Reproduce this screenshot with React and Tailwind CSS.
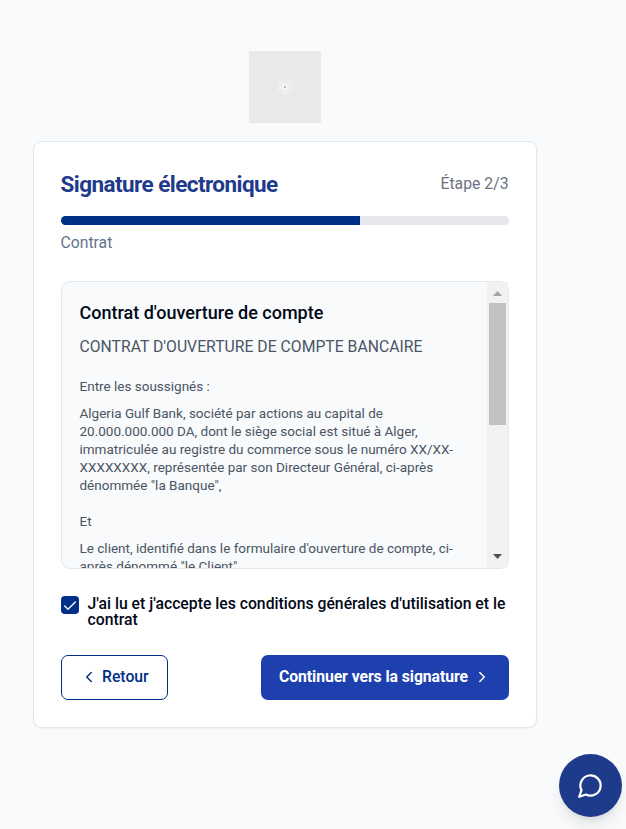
import { Check, ChevronLeft, ChevronRight } from "lucide-react";

function Logo() {
  return (
    <div className="flex size-[72px] items-center justify-center bg-[#e9e9e9]">
      <svg width="18" height="18" viewBox="0 0 18 18">
        <circle cx="9" cy="9" r="8" fill="#eeeeee" />
        <circle cx="9" cy="9" r="6" fill="none" stroke="#ebebeb" strokeWidth="2.5" strokeDasharray="1 3.7" />
        <circle cx="9" cy="9" r="3.2" fill="#f6f6f6" />
        <rect x="8" y="8" width="2" height="2" fill="#b8b8b8" />
      </svg>
    </div>
  );
}

function ChatIcon() {
  return (
    <svg width="27" height="27" viewBox="0 0 24 24" fill="none" stroke="currentColor" strokeWidth="2" strokeLinecap="round" strokeLinejoin="round">
      <path d="M7.9 20A9 9 0 1 0 4 16.1L2 22Z" />
    </svg>
  );
}

function Header() {
  return (
    <header>
      <div className="flex h-8 items-center justify-between">
        <h1 className="-ml-[0.5px] text-[22.5px] leading-8 font-bold tracking-[-0.5625px] text-[#1e3a8a]">Signature électronique</h1>
        <span className="mr-[0.5px] text-[15.75px] leading-8 text-[#6b7280]">Étape 2/3</span>
      </div>
      <div className="mt-4 h-[9px] overflow-hidden rounded-full bg-[#e5e7eb]">
        <div className="h-full w-2/3 bg-[#002f87]" />
      </div>
      <p className="mt-[7px] -ml-[0.5px] text-[15.75px] leading-[22px] text-[#64748b]">Contrat</p>
    </header>
  );
}

function Scrollbar() {
  return (
    <div className="flex w-[21px] shrink-0 flex-col items-center bg-[#f1f1f1]">
      <svg width="21" height="21" viewBox="0 0 21 21">
        <path d="M6 14h9l-4.5-5z" fill="#a3a3a3" />
      </svg>
      <div className="h-[122px] w-[17px] bg-[#c1c1c1]" />
      <svg className="mt-auto" width="21" height="21" viewBox="0 0 21 21">
        <path d="M6 7h9l-4.5 5z" fill="#505050" />
      </svg>
    </div>
  );
}

function Contract() {
  return (
    <section className="mt-[27px] flex h-72 rounded-[9px] border border-[#e2e8f0] bg-[#f8fafc]">
      <div className="flex-1 overflow-hidden rounded-l-[8px] pt-[17px] pr-[18px] pl-[17.5px] text-[#4b5563]">
        <h2 className="text-[18px] leading-[27px] font-medium text-[#020817]">Contrat d'ouverture de compte</h2>
        <h3 className="mt-[10px] text-[15.75px] leading-[22px]">CONTRAT D'OUVERTURE DE COMPTE BANCAIRE</h3>
        <div className="text-[13.5px] leading-[18px] whitespace-nowrap">
          <p className="mt-[19px]">Entre les soussignés :</p>
          <p className="mt-[9px]">
            Algeria Gulf Bank, société par actions au capital de<br />
            20.000.000.000 DA, dont le siège social est situé à Alger,<br />
            immatriculée au registre du commerce sous le numéro XX/XX-<br />
            XXXXXXXX, représentée par son Directeur Général, ci-après<br />
            dénommée "la Banque",
          </p>
          <p className="mt-[18px]">Et</p>
          <p className="mt-[9px]">
            Le client, identifié dans le formulaire d'ouverture de compte, ci-<br />
            après dénommé "le Client"
          </p>
        </div>
      </div>
      <Scrollbar />
    </section>
  );
}

function Consent() {
  return (
    <label className="mt-[27px] flex items-start gap-[8.5px]">
      <span className="flex size-[18px] shrink-0 items-center justify-center rounded-[4px] bg-[#002f87] text-white">
        <Check className="mt-px" size={16} strokeWidth={2} />
      </span>
      <span className="text-[15.75px] leading-[16px] font-medium whitespace-nowrap text-[#020817]">
        J'ai lu et j'accepte les conditions générales d'utilisation et le<br />
        contrat
      </span>
    </label>
  );
}

function Actions() {
  return (
    <div className="mt-[27px] flex justify-between text-[15.75px] leading-[22px]">
      <button className="flex h-[45px] w-[107px] items-center rounded-[7px] border border-[#002f87] pb-px pl-[18px] font-medium text-[#002f87]">
        <ChevronLeft size={18} strokeWidth={2} />
        <span className="ml-[4px]">Retour</span>
      </button>
      <button className="flex h-[45px] w-[248px] items-center rounded-[7px] bg-[#1e40af] pb-[2px] pl-[18px] font-bold text-white">
        <span className="tracking-[-0.07px]">Continuer vers la signature</span>
        <ChevronRight className="ml-[5px]" size={18} strokeWidth={2} />
      </button>
    </div>
  );
}

export default function App() {
  return (
    <div className="h-[829px] w-[626px] overflow-hidden bg-[#f9fafb] pt-[51px] font-[Roboto,sans-serif]">
      <main className="ml-[33px] flex w-[504px] flex-col items-center">
        <Logo />
        <div className="mt-[18px] h-[587px] w-full rounded-[9px] border border-[#e2e8f0] bg-white px-[27px] pt-[26px] shadow-[0_1px_2px_0_rgba(0,0,0,0.05)]">
          <Header />
          <Contract />
          <Consent />
          <Actions />
        </div>
      </main>
      <button
        aria-label="Chat"
        className="absolute top-[754px] left-[559px] flex size-[63px] items-center justify-center rounded-full bg-[#1e3a8a] text-white shadow-[0_10px_15px_-3px_rgba(0,0,0,0.1),0_4px_6px_-4px_rgba(0,0,0,0.1)]"
      >
        <ChatIcon />
      </button>
    </div>
  );
}
